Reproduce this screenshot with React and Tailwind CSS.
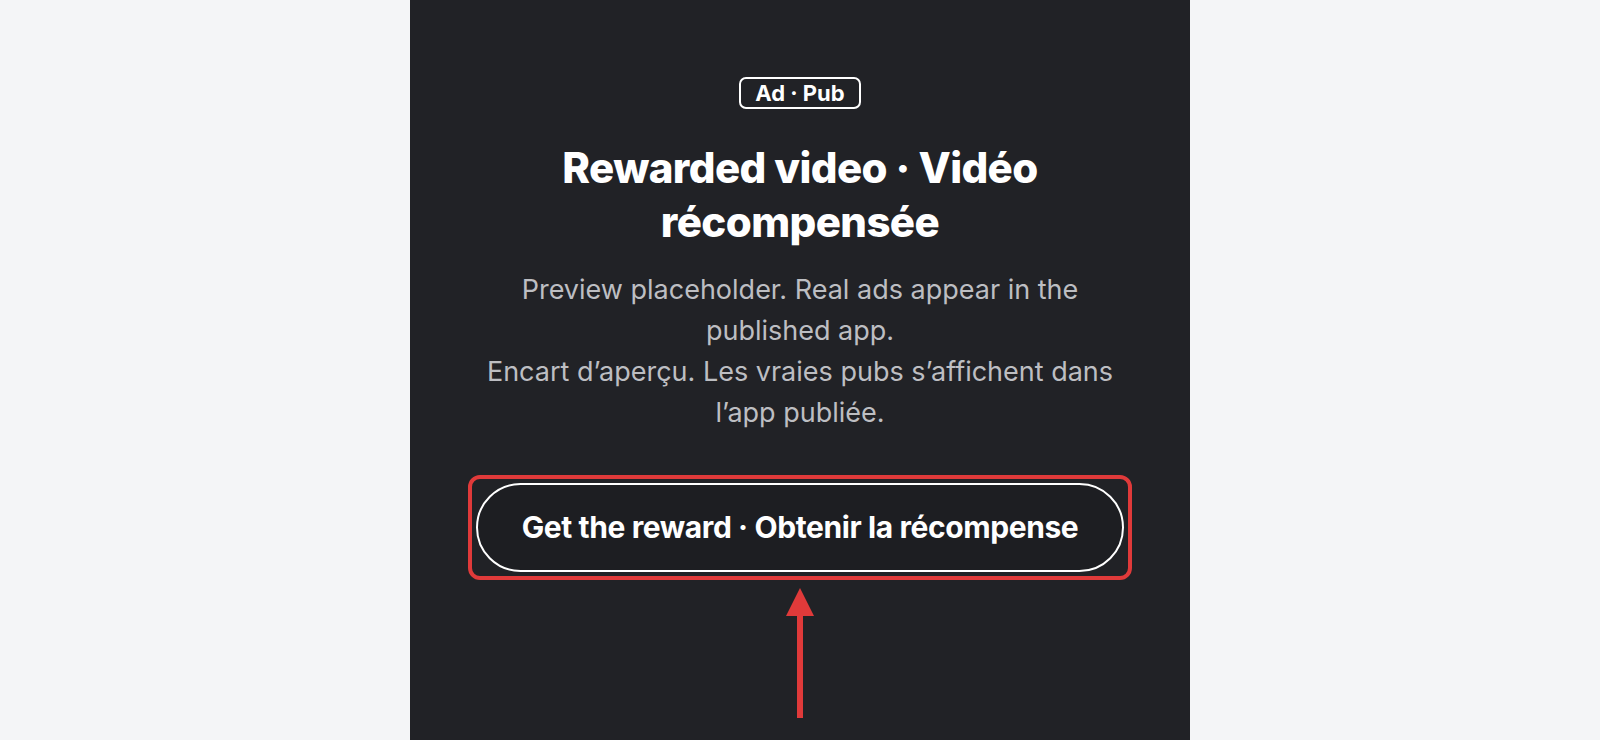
import React from "react";

export default function App() {
  return (
    <div className="min-h-screen w-full bg-[#f4f5f7] flex justify-center" style={{ fontFamily: "Inter, 'Noto Sans', sans-serif" }}>
      <div className="w-[780px] h-[740px] bg-[#212226] flex flex-col items-center pt-[77px] px-[64px] overflow-hidden">
        <div className="h-[32px] px-[14px] flex items-center rounded-[7px] border-2 border-white text-white font-bold text-[22px] leading-none">
          Ad · Pub
        </div>
        <h1 className="mt-[32px] text-white font-extrabold text-[42px] leading-[54px] text-center tracking-[-0.6px]">
          Rewarded video · Vidéo récompensée
        </h1>
        <p className="mt-[20px] text-[#bdbec2] text-[27px] leading-[41px] text-center">
          Preview placeholder. Real ads appear in the published app.
          <br />
          Encart d’aperçu. Les vraies pubs s’affichent dans l’app publiée.
        </p>
        <div className="mt-[42px] w-[664px] p-[4px] border-4 border-[#e03a3a] rounded-[12px] shrink-0">
          <button className="w-full h-[89px] rounded-full border-2 border-white bg-[#1d1e22] text-white font-bold text-[30px] tracking-[-0.4px]">
            Get the reward · Obtenir la récompense
          </button>
        </div>
        <svg width="40" height="130" viewBox="0 0 40 130" className="mt-[8px] shrink-0">
          <polygon points="20,0 34,28 6,28" fill="#e03a3a" />
          <rect x="17" y="26" width="6" height="104" fill="#e03a3a" />
        </svg>
      </div>
    </div>
  );
}
